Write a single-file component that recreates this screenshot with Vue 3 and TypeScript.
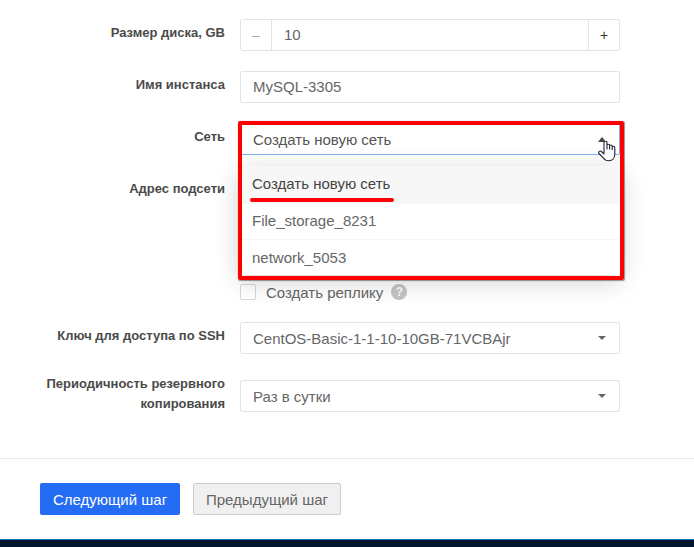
<script setup lang="ts">
import { ref } from 'vue'

const diskSize = ref(10)
const instanceName = ref('MySQL-3305')
const networks = ['Создать новую сеть', 'File_storage_8231', 'network_5053']
</script>

<template>
  <div class="page">
    <div class="form">
      <div class="row row-disk">
        <div class="label">Размер диска, GB</div>
        <div class="stepper">
          <button class="step step-minus">–</button>
          <input class="step-input" :value="diskSize" readonly />
          <button class="step step-plus">+</button>
        </div>
      </div>

      <div class="row row-name">
        <div class="label">Имя инстанса</div>
        <input class="field" :value="instanceName" readonly />
      </div>

      <div class="row row-net">
        <div class="label">Сеть</div>
        <div class="select select-open">
          <span>{{ networks[0] }}</span>
          <i class="caret caret-up"></i>
          <div class="menu">
            <div v-for="(n, i) in networks" :key="n" class="menu-item" :class="{ active: i === 0 }">{{ n }}</div>
            <div class="mark"></div>
          </div>
          <div class="frame"></div>
          <svg class="cursor" width="18" height="21" viewBox="0 0 18 21">
            <path d="M6 11.500V1.600a1.500 1.500 0 0 1 3 0V8V4.500a1.300 1.300 0 0 1 2.600 0V8V5.300a1.300 1.300 0 0 1 2.600 0V8.500V6.500a1.300 1.300 0 0 1 2.600 0V13c0 4-2.500 6.800-6 6.800-3 0-4.500-1.200-5.600-3L1 12.500c-1-1.700 1-3.300 2.400-2L6 13" fill="#fff" stroke="#1d2438" stroke-width="1.100" stroke-linejoin="round" stroke-linecap="round" />
          </svg>
        </div>
      </div>

      <div class="row row-subnet">
        <div class="label">Адрес подсети</div>
        <input class="field" value="" readonly />
      </div>

      <div class="row row-replica">
        <div></div>
        <label class="check">
          <span class="box"></span>
          <span class="check-text">Создать реплику</span>
          <span class="hint">?</span>
        </label>
      </div>

      <div class="row row-ssh">
        <div class="label">Ключ для доступа по SSH</div>
        <div class="select">
          <span>CentOS-Basic-1-1-10-10GB-71VCBAjr</span>
          <i class="caret"></i>
        </div>
      </div>

      <div class="row row-backup">
        <div class="label label-two">Периодичность резервного копирования</div>
        <div class="select">
          <span>Раз в сутки</span>
          <i class="caret"></i>
        </div>
      </div>
    </div>

    <div class="actions">
      <button class="btn btn-primary">Следующий шаг</button>
      <button class="btn btn-default">Предыдущий шаг</button>
    </div>

    <div class="footer"></div>
  </div>
</template>

<style>
html, body { margin: 0; background: #fff; }
</style>

<style scoped>
.page { width: 694px; height: 547px; overflow: hidden; background: #fff; font-family: "Liberation Sans", Arial, sans-serif; font-size: 15px; color: #666; display: flex; flex-direction: column; }
.form { padding: 19px 74px 0 0; height: 458px; flex: none; box-sizing: border-box; }
.row { display: grid; grid-template-columns: 225px 380px; column-gap: 15px; }
.row-disk, .row-name { margin-bottom: 20px; }
.row-net { margin-bottom: 20px; position: relative; z-index: 2; }
.row-subnet { height: 89px; margin-bottom: 20px; }
.row-replica { height: 16px; margin-bottom: 22px; }
.row-ssh { margin-bottom: 26px; }

.label { font-size: 13px; font-weight: bold; color: #4a4a4a; text-align: right; line-height: 20px; padding-top: 4px; }
.label-two { padding-top: 0; margin-top: -6px; }

.stepper { display: flex; height: 32px; box-sizing: border-box; border: 1px solid #e3e3e3; border-radius: 2px; }
.step { width: 31px; padding: 0; border: 0; background: #fff; font-family: inherit; font-size: 14px; color: #333; }
.step-minus { color: #aaa; border-right: 1px solid #e3e3e3; }
.step-plus { border-left: 1px solid #e3e3e3; }
.step-input { flex: 1; min-width: 0; border: 0; outline: 0; padding: 0 12px 1px; font: inherit; color: #666; }

.field { height: 32px; box-sizing: border-box; width: 380px; border: 1px solid #e3e3e3; border-radius: 2px; padding: 0 12px 2px; font: inherit; color: #666; outline: 0; }

.select { position: relative; height: 32px; box-sizing: border-box; border: 1px solid #e3e3e3; border-radius: 2px; padding: 0 12px; line-height: 32px; color: #666; background: #fff; }
.select-open { border-color: #7fb3ee; color: #555; }
.caret { position: absolute; right: 13px; top: 13px; width: 0; height: 0; border-left: 4.500px solid transparent; border-right: 4.500px solid transparent; border-top: 4px solid #666; }
.caret-up { border-top: 0; border-bottom: 5px solid #444; top: 13px; }

.menu { position: absolute; left: -1px; right: -1px; top: 42px; background: #fff; box-shadow: 0 6px 24px rgba(0, 0, 0, .2); }
.menu-item { height: 36px; line-height: 34px; padding-left: 12px; color: #666; border-top: 1px solid #f6f6f6; box-sizing: border-box; }
.menu-item:nth-child(3) { line-height: 35px; }
.menu-item.active { height: 37px; line-height: 36px; color: #444; background: #f7f7f7; border-top: 0; }
.mark { position: absolute; left: 10px; top: 32px; width: 144px; height: 3.500px; border-radius: 2px; background: #f00; }
.frame { position: absolute; left: -3px; right: -5px; top: -3px; height: 159px; box-sizing: border-box; border: 4px solid #f00; border-radius: 2px; box-shadow: .5px .5px 1px rgba(0, 0, 0, .4); pointer-events: none; }
.cursor { position: absolute; left: 357px; top: 17px; }

.check { display: flex; align-items: center; height: 16px; }
.box { width: 16px; height: 16px; box-sizing: border-box; border: 1px solid #d8d8d8; border-radius: 2px; background: #fff; }
.check-text { margin-left: 10px; color: #666; }
.hint { margin-left: 8px; width: 16px; height: 16px; border-radius: 50%; background: #c4c4c4; color: #fff; font-size: 12px; font-weight: bold; line-height: 16px; text-align: center; }

.actions { display: flex; gap: 13px; padding: 24px 0 0 40px; border-top: 1px solid #e8e8e8; height: 81px; box-sizing: border-box; flex: none; }
.btn { height: 32px; box-sizing: border-box; border-radius: 2px; font-family: inherit; font-size: 15px; padding: 0; }
.btn-primary { width: 140px; border: 0; background: #256cf5; color: #fff; }
.btn-default { width: 148px; border: 1px solid #ccc; background: #f0f0f0; color: #666; }

.footer { height: 8px; flex: none; box-sizing: border-box; background: #04162e; border-top: 1px solid #1c6fb0; }
</style>
